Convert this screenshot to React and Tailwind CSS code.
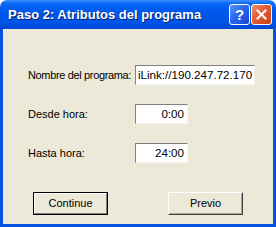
export default function App() {
  const font = "font-['Liberation_Sans',Arial,sans-serif]";
  const sunken =
    "bg-white border border-t-[#808080] border-l-[#808080] border-b-[#f4f3ee] border-r-[#f4f3ee] flex items-center whitespace-nowrap overflow-hidden";

  return (
    <div className={`w-[276px] h-[227px] flex flex-col ${font} text-[11px] text-black`}>
      {/* Title bar */}
      <div className="h-[29px] shrink-0 rounded-t-[7px] flex items-center pl-[8px] pr-[4px] bg-[linear-gradient(to_bottom,#3C8FFF_0%,#0A6AF6_12%,#0058EE_35%,#0054E6_80%,#0048D2_100%)]">
        <span className="flex-1 text-white font-bold text-[13px] [text-shadow:1px_1px_0_#0a1f6a]">
          Paso 2: Atributos del programa
        </span>
        <div className="flex gap-[1px]">
          <div className="w-[21px] h-[21px] rounded-[3px] border border-white flex items-center justify-center bg-[linear-gradient(135deg,#5C94F8_0%,#2A66EE_45%,#1548D8_100%)]">
            <span className="text-white font-bold text-[15px] leading-none">?</span>
          </div>
          <div className="w-[21px] h-[21px] rounded-[3px] border border-white flex items-center justify-center bg-[linear-gradient(135deg,#F0946E_0%,#E25A30_45%,#C8401A_100%)]">
            <svg width="11" height="11" viewBox="0 0 11 11">
              <path d="M1.5 1.5 L9.5 9.5 M9.5 1.5 L1.5 9.5" stroke="#fff" strokeWidth="2" strokeLinecap="square" />
            </svg>
          </div>
        </div>
      </div>

      {/* Body */}
      <div className="flex-1 flex flex-col bg-[#ECE9D8] border-x-[3px] border-b-[3px] border-[#0553E3] pt-[36px] pl-[25px]">
        <div className="flex flex-col gap-[19px]">
          <div className="flex items-center">
            <span className="w-[107px] shrink-0 whitespace-nowrap tracking-[-0.35px]">Nombre del programa:</span>
            <div className={`w-[120px] h-[20px] pl-[2px] text-[11.6px] ${sunken}`}>iLink://190.247.72.170</div>
          </div>
          <div className="flex items-center">
            <span className="w-[107px] shrink-0 whitespace-nowrap">Desde hora:</span>
            <div className={`w-[53px] h-[20px] justify-end pr-[3px] text-[11.6px] ${sunken}`}>0:00</div>
          </div>
          <div className="flex items-center">
            <span className="w-[107px] shrink-0 whitespace-nowrap">Hasta hora:</span>
            <div className={`w-[53px] h-[20px] justify-end pr-[3px] text-[11.6px] ${sunken}`}>24:00</div>
          </div>
        </div>

        <div className="flex gap-[60px] mt-[29px] pl-[5px]">
          <div className="w-[75px] h-[23px] border border-black">
            <div className="w-full h-full border border-t-white border-l-white border-b-[#808080] border-r-[#808080] flex items-center justify-center">
              Continue
            </div>
          </div>
          <div className="w-[75px] h-[23px] border border-t-white border-l-white border-b-[#404040] border-r-[#404040]">
            <div className="w-full h-full border border-t-[#ECE9D8] border-l-[#ECE9D8] border-b-[#aca899] border-r-[#aca899] flex items-center justify-center">
              Previo
            </div>
          </div>
        </div>
      </div>
    </div>
  );
}
